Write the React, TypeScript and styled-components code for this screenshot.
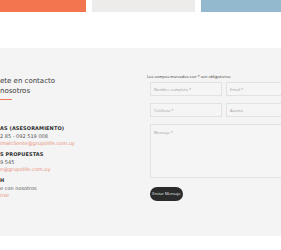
import React from "react";
import styled, { createGlobalStyle } from "styled-components";

const Global = createGlobalStyle`
  html, body { margin: 0; padding: 0; background: #ffffff; overflow: hidden; }
  body { width: 281px; height: 250px; }
  * { box-sizing: border-box; }
`;

const Page = styled.div`
  width: 281px;
  height: 250px;
  display: flex;
  flex-direction: column;
  overflow: hidden;
`;

const Cards = styled.div`
  display: flex;
  gap: 6px;
  height: 12px;
`;

const Card = styled.div<{ $bg: string; $w?: number }>`
  background: ${(p) => p.$bg};
  ${(p) => (p.$w ? `width: ${p.$w}px; flex: none;` : "flex: 1;")}
`;

const Contact = styled.section`
  margin-top: 36px;
  height: 188px;
  background: #f4f4f4;
  display: grid;
  grid-template-columns: 147px 134px;
  padding-top: 26px;
  overflow: hidden;
`;

const Left = styled.div`
  display: flex;
  flex-direction: column;
  font-family: "DejaVu Sans", sans-serif;
  color: #333;
  padding-top: 2px;
`;

const Title = styled.h2`
  margin: 0;
  font-weight: 400;
  font-size: 7px;
  line-height: 10px;
  color: #3a3a3a;
`;

const Rule = styled.div`
  width: 12px;
  height: 1px;
  background: #ef7a5d;
  margin-top: 3px;
  margin-bottom: 23px;
`;

const Group = styled.div`
  display: flex;
  flex-direction: column;
  margin-bottom: 2px;
`;

const GroupTitle = styled.div`
  font-weight: 700;
  font-size: 5px;
  line-height: 10px;
  color: #2e2e2e;
  letter-spacing: 0.1px;
`;

const Line = styled.div<{ $accent?: boolean }>`
  font-size: 5px;
  line-height: 7px;
  color: ${(p) => (p.$accent ? "#e8907a" : "#555")};
`;

const Right = styled.div`
  display: flex;
  flex-direction: column;
  font-family: "Open Sans", sans-serif;
  overflow: hidden;
`;

const Note = styled.div`
  font-size: 4px;
  line-height: 6px;
  color: #333;
  white-space: nowrap;
  margin-bottom: 2px;
`;

const Form = styled.form`
  display: grid;
  grid-template-columns: 72px 72px;
  gap: 7px 4px;
  margin-left: 3px;
`;

const Field = styled.div<{ $tall?: boolean; $full?: boolean }>`
  height: ${(p) => (p.$tall ? 54 : 14)}px;
  ${(p) => (p.$full ? "grid-column: 1 / span 2; width: 160px;" : "")}
  border: 1px solid #e2e2e2;
  background: #f5f5f5;
  font-size: 4px;
  color: #9a9a9a;
  padding: ${(p) => (p.$tall ? "5px 3px" : "0 3px")};
  display: flex;
  align-items: ${(p) => (p.$tall ? "flex-start" : "center")};
`;

const Button = styled.button`
  margin-top: 3px;
  margin-left: 3px;
  width: 33px;
  height: 14px;
  border: none;
  border-radius: 7px;
  background: #2b2b2b;
  color: #f0f0f0;
  font-family: "Open Sans", sans-serif;
  font-size: 4px;
  padding: 0;
`;

export default function App() {
  return (
    <>
      <Global />
      <Page>
        <Cards>
          <Card $bg="#f2754f" $w={86} />
          <Card $bg="#eeeceb" $w={103} />
          <Card $bg="#92b9cd" />
        </Cards>
        <Contact>
          <Left>
            <Title>
              ete en contacto
              <br />
              nosotros
            </Title>
            <Rule />
            <Group>
              <GroupTitle>AS (ASESORAMIENTO)</GroupTitle>
              <Line>2 85 - 092 519 008</Line>
              <Line $accent>imalcliente@grupolife.com.uy</Line>
            </Group>
            <Group>
              <GroupTitle>S PROPUESTAS</GroupTitle>
              <Line>9 545</Line>
              <Line $accent>n@grupolife.com.uy</Line>
            </Group>
            <Group>
              <GroupTitle>H</GroupTitle>
              <Line>e con nosotros</Line>
              <Line $accent>irse</Line>
            </Group>
          </Left>
          <Right>
            <Note>Los campos marcados con * son obligatorios</Note>
            <Form>
              <Field>Nombre completo *</Field>
              <Field>Email *</Field>
              <Field>Teléfono *</Field>
              <Field>Asunto</Field>
              <Field $tall $full>Mensaje *</Field>
            </Form>
            <div>
              <Button type="button">Enviar Mensaje</Button>
            </div>
          </Right>
        </Contact>
      </Page>
    </>
  );
}
